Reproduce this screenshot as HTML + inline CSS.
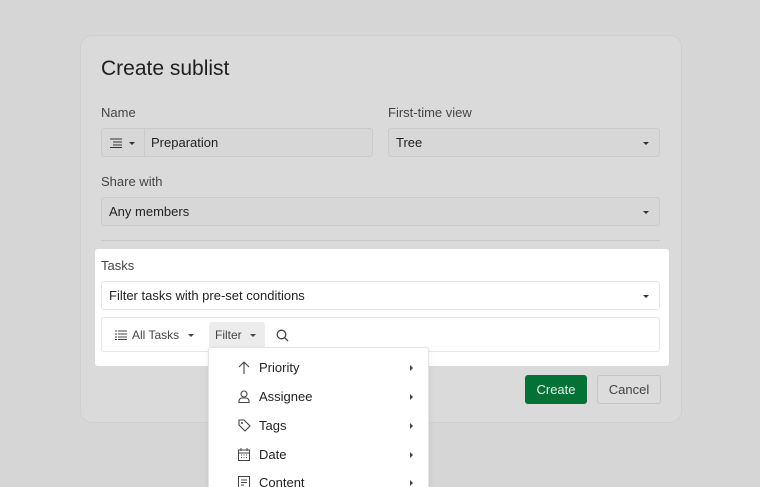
<!DOCTYPE html>
<html style="width:760px;height:487px;overflow:hidden"><head><style>
*{box-sizing:border-box;margin:0;padding:0}
body{width:760px;height:487px;background:#d6d6d6;font-family:"Liberation Sans",sans-serif;position:relative;overflow:hidden;color:#222}
.abs{position:absolute}
.dlg{left:80px;top:35px;width:602px;height:388px;background:#dadada;border:1px solid #cfcfcf;border-radius:12px}
.lbl{font-size:13px;color:#444}
.inp{border:1px solid #cacaca;border-radius:3px;background:#d7d7d7;font-size:13px;color:#222;display:flex;align-items:center;padding-left:7px}
.caret{position:absolute;right:10px;top:50%;margin-top:-1px;width:0;height:0;border-left:3px solid transparent;border-right:3px solid transparent;border-top:3px solid #333}
.w{background:#fff}
.winp{border:1px solid #e6e6e6;border-radius:3px;background:#fff;font-size:13px;display:flex;align-items:center;padding-left:7px}
.mi{position:absolute;left:0;width:221px;height:29px;display:flex;align-items:center;font-size:13px;color:#222}
.mi svg{position:absolute;left:29px}
.mi span{position:absolute;left:50px}
.mi i{position:absolute;right:17px;width:0;height:0;border-top:3px solid transparent;border-bottom:3px solid transparent;border-left:3px solid #444}
</style></head><body>
<div class="abs dlg"></div>
<div class="abs" style="left:101px;top:57px;font-size:21px;color:#1e1e1e">Create sublist</div>
<div class="abs lbl" style="left:101px;top:105px">Name</div>
<div class="abs lbl" style="left:388px;top:105px">First-time view</div>
<div class="abs inp" style="left:101px;top:128px;width:272px;height:29px;padding-left:0">
 <div style="width:43px;height:100%;border-right:1px solid #cacaca;position:relative">
  <svg class="abs" style="left:8px;top:9px" width="12" height="10" viewBox="0 0 12 10"><path d="M0 1h12M3 4h9M3 7h9M0 9.5h12" stroke="#333" stroke-width="1"/></svg>
  <div class="abs" style="left:27px;top:13px;border-left:3px solid transparent;border-right:3px solid transparent;border-top:3px solid #333"></div>
 </div>
 <span style="padding-left:6px">Preparation</span>
</div>
<div class="abs inp" style="left:388px;top:128px;width:272px;height:29px">Tree<div class="caret"></div></div>
<div class="abs lbl" style="left:101px;top:174px">Share with</div>
<div class="abs inp" style="left:101px;top:197px;width:559px;height:29px">Any members<div class="caret"></div></div>
<div class="abs" style="left:101px;top:240px;width:559px;height:1px;background:#c8c8c8"></div>
<div class="abs w" style="left:95px;top:249px;width:574px;height:117px;border-radius:3px"></div>
<div class="abs lbl" style="left:101px;top:258px">Tasks</div>
<div class="abs winp" style="left:101px;top:281px;width:559px;height:29px">Filter tasks with pre-set conditions<div class="caret"></div></div>
<div class="abs winp" style="left:101px;top:317px;width:559px;height:35px;font-size:12px;color:#444">
 <svg class="abs" style="left:13px;top:12px" width="12" height="10" viewBox="0 0 12 10"><path d="M0 1h2M3 1h9M0 4h2M3 4h9M0 7h2M3 7h9M0 9.5h2M3 9.5h9" stroke="#444"/></svg>
 <span class="abs" style="left:30px;top:10px">All Tasks</span>
 <div class="abs" style="left:86px;top:16px;border-left:3px solid transparent;border-right:3px solid transparent;border-top:3px solid #444"></div>
 <div class="abs" style="left:107px;top:4px;width:56px;height:26px;background:#ececec;border-radius:3px"></div>
 <span class="abs" style="left:113px;top:10px">Filter</span>
 <div class="abs" style="left:148px;top:16px;border-left:3px solid transparent;border-right:3px solid transparent;border-top:3px solid #444"></div>
 <svg class="abs" style="left:174px;top:11px" width="13" height="13" viewBox="0 0 13 13"><circle cx="5.5" cy="5.5" r="4.3" fill="none" stroke="#444" stroke-width="1.3"/><path d="M8.7 8.7L12 12" stroke="#444" stroke-width="1.3"/></svg>
</div>
<div class="abs" style="left:525px;top:375px;width:62px;height:29px;background:#047235;border-radius:3px;color:#e6efe9;font-size:13px;display:flex;align-items:center;justify-content:center">Create</div>
<div class="abs" style="left:597px;top:375px;width:64px;height:29px;background:#dcdcdc;border:1px solid #c4c4c4;border-radius:3px;color:#444;font-size:13px;display:flex;align-items:center;justify-content:center">Cancel</div>
<div class="abs" style="left:208px;top:347px;width:221px;height:140px;background:#fff;border:1px solid #e4e4e4;border-bottom:none;border-radius:3px 3px 0 0;box-shadow:0 2px 6px rgba(0,0,0,.08)">
 <div class="mi" style="top:5px"><svg width="12" height="13" viewBox="0 0 12 13"><path d="M6 13V1M1 6l5-5 5 5" fill="none" stroke="#444" stroke-width="1.1"/></svg><span>Priority</span><i></i></div>
 <div class="mi" style="top:34px"><svg width="12" height="13" viewBox="0 0 12 13"><circle cx="6" cy="4" r="3" fill="none" stroke="#444" stroke-width="1.1"/><path d="M1 12.5v-1.5a3 3 0 0 1 3-3h4a3 3 0 0 1 3 3v1.5z" fill="none" stroke="#444" stroke-width="1.1"/></svg><span>Assignee</span><i></i></div>
 <div class="mi" style="top:63px"><svg width="13" height="13" viewBox="0 0 13 13"><path d="M1 1h5l6 6-5 5-6-6z" fill="none" stroke="#444" stroke-width="1.1"/><circle cx="4" cy="4" r="1" fill="#444"/></svg><span>Tags</span><i></i></div>
 <div class="mi" style="top:92px"><svg width="12" height="13" viewBox="0 0 12 13"><rect x="0.5" y="2" width="11" height="10.5" fill="none" stroke="#444"/><path d="M0.5 5h11M3 0v3M9 0v3M3 7h1M5.5 7h1M8 7h1M3 9.5h1M5.5 9.5h1M8 9.5h1" stroke="#444"/></svg><span>Date</span><i></i></div>
 <div class="mi" style="top:120px"><svg width="12" height="13" viewBox="0 0 12 13"><rect x="0.5" y="0.5" width="11" height="12" fill="none" stroke="#444"/><path d="M3 4h6M3 6.5h6M3 9h3" stroke="#444"/></svg><span>Content</span><i></i></div>
</div>
</body></html>
